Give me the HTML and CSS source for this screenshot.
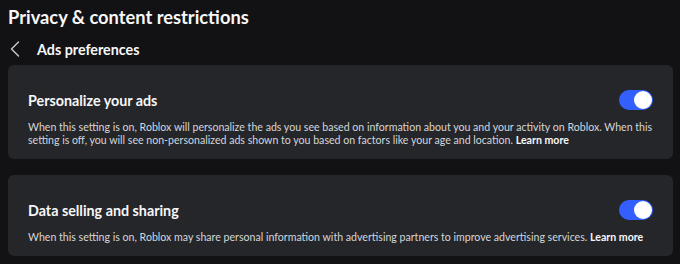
FILE: index.html
```html
<!DOCTYPE html>
<html>
<head>
    <title>Ads preferences</title>
    <link rel="stylesheet" href="styles.css">
</head>
<body>
    <h1 class="page-title">Privacy &amp; content restrictions</h1>

    <div class="subheader">
        <svg class="back" width="10" height="16" viewBox="0 0 10 16">
            <polyline points="8.5,1 1.5,8 8.5,15" fill="none" stroke="#c9cbcf" stroke-width="1.4" stroke-linecap="round" stroke-linejoin="round"/>
        </svg>
        <span class="subheader-text">Ads preferences</span>
    </div>

    <div class="card">
        <div class="card-row">
            <span class="card-title">Personalize your ads</span>
            <span class="toggle"><span class="knob"></span></span>
        </div>
        <p class="card-desc">When this setting is on, Roblox will personalize the ads you see based on information about you and your activity on Roblox. When this setting is off, you will see non-personalized ads shown to you based on factors like your age and location. <b>Learn more</b></p>
    </div>

    <div class="card">
        <div class="card-row">
            <span class="card-title">Data selling and sharing</span>
            <span class="toggle"><span class="knob"></span></span>
        </div>
        <p class="card-desc">When this setting is on, Roblox may share personal information with advertising partners to improve advertising services. <b>Learn more</b></p>
    </div>
</body>
</html>
```

FILE: styles.css
```css
body {
    margin: 0;
    padding: 4px 7px 0 8px;
    background-color: #121215;
    color: #f7f7f8;
    font-family: Lato, "Liberation Sans", sans-serif;
}
.page-title {
    margin: 0;
    font-size: 18.3px;
    line-height: 26px;
    font-weight: bold;
}
.subheader {
    display: flex;
    align-items: center;
    height: 32px;
    margin-top: 3px;
}
.back {
    margin-left: 2px;
}
.subheader-text {
    margin-left: 17px;
    font-size: 14.3px;
    font-weight: bold;
}
.card {
    background-color: #25262a;
    border-radius: 6px;
    padding: 25px 20px 12px 20px;
    margin-bottom: 16px;
}
.card-row {
    display: flex;
    align-items: center;
    justify-content: space-between;
    height: 20px;
}
.card-title {
    font-size: 14.3px;
    font-weight: bold;
}
.toggle {
    display: flex;
    justify-content: flex-end;
    align-items: center;
    width: 34px;
    height: 20px;
    padding: 0 1px;
    box-sizing: border-box;
    border-radius: 10px;
    background-color: #335fff;
}
.knob {
    width: 18px;
    height: 18px;
    border-radius: 50%;
    background-color: #ffffff;
}
.card-desc {
    margin: 11px 0 0 0;
    font-size: 10.6px;
    line-height: 13px;
    color: #d4d6da;
}
.card-desc b {
    color: #f7f7f8;
}
```
